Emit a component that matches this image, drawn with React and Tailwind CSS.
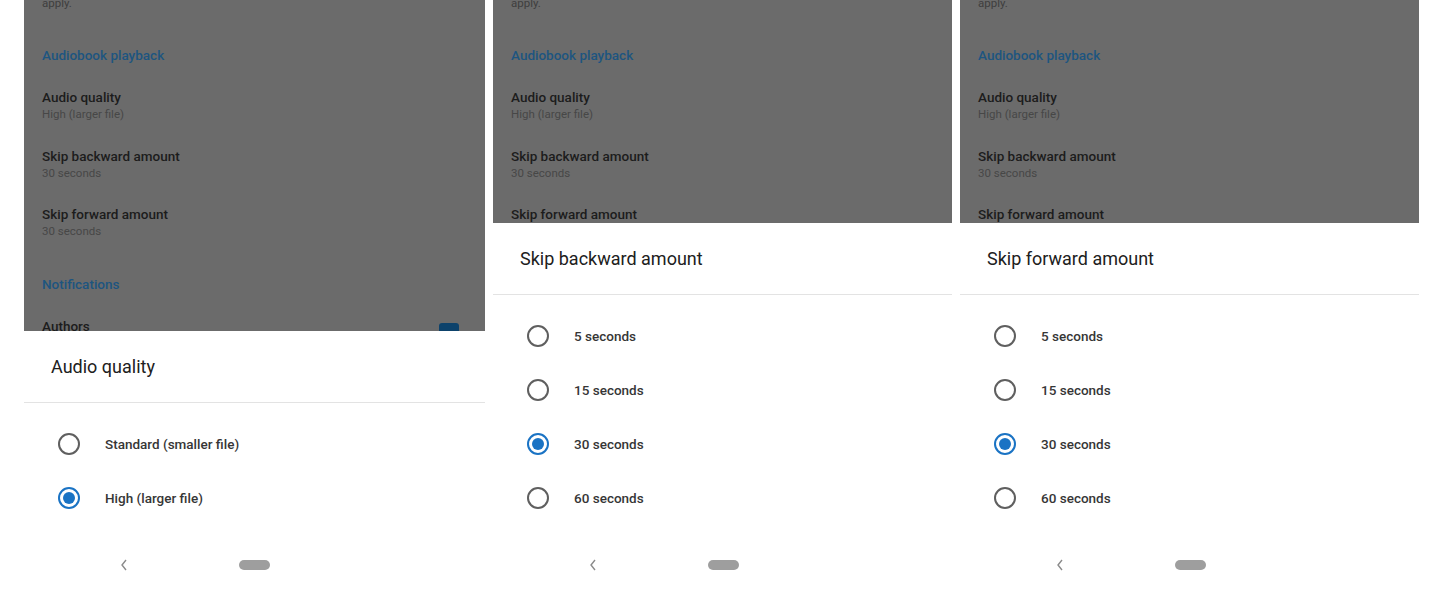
const font = { fontFamily: "Roboto, 'Noto Sans', sans-serif" };

const SettingsBehind = ({ showNotifications }) => (
  <div className="relative flex flex-col px-[18px]">
    <p className="mt-[-4px] text-[11.5px] leading-[14px] text-[#3e3e3e]">apply.</p>
    <p className="mt-[36px] text-[13.5px] font-medium leading-[18px] text-[#1d5580]">Audiobook playback</p>
    <SettingRow title="Audio quality" value="High (larger file)" top="mt-[24px]" />
    <SettingRow title="Skip backward amount" value="30 seconds" top="mt-[26px]" />
    <SettingRow title="Skip forward amount" value="30 seconds" top="mt-[25px]" />
    {showNotifications && (
      <>
        <p className="mt-[37px] text-[13.5px] font-medium leading-[18px] text-[#1d5580]">Notifications</p>
        <div className="mt-[24px] flex items-start justify-between">
          <p className="text-[13.5px] font-medium leading-[18px] text-[#1c1c1c]">Authors</p>
          <div className="mr-[8px] mt-[6px] h-[20px] w-[20px] rounded-[3px] bg-[#0d426b]" />
        </div>
      </>
    )}
  </div>
);

const SettingRow = ({ title, value, top }) => (
  <div className={top}>
    <p className="text-[13.5px] font-medium leading-[18px] text-[#1c1c1c]">{title}</p>
    <p className="mt-[1px] text-[11.5px] leading-[14px] text-[#474747]">{value}</p>
  </div>
);

const Radio = ({ checked }) =>
  checked ? (
    <div className="grid h-[22px] w-[22px] place-items-center rounded-full border-2 border-[#1a73c4]">
      <div className="h-[12px] w-[12px] rounded-full bg-[#1a73c4]" />
    </div>
  ) : (
    <div className="h-[22px] w-[22px] rounded-full border-2 border-[#5f5f5f]" />
  );

const Sheet = ({ title, options, selected }) => (
  <div className="flex flex-1 flex-col bg-white">
    <div className="flex h-[72px] items-center border-b border-[#e3e3e3] pl-[27px]">
      <h2 className="text-[18px] leading-[24px] text-[#202020]">{title}</h2>
    </div>
    <div className="flex flex-col pt-[14px]">
      {options.map((o) => (
        <div key={o} className="flex h-[54px] items-center">
          <div className="ml-[34px] mr-[25px]">
            <Radio checked={o === selected} />
          </div>
          <span className="text-[13.5px] font-medium text-[#363636]">{o}</span>
        </div>
      ))}
    </div>
    <div className="mt-auto flex h-[58px] items-center">
      <svg width="10" height="14" viewBox="0 0 10 14" className="ml-[95px]">
        <path d="M7 2 L3 7 L7 12" fill="none" stroke="#8a8a8a" strokeWidth="1.4" />
      </svg>
      <div className="ml-[110px] h-[10px] w-[31px] rounded-full bg-[#9e9e9e]" />
    </div>
  </div>
);

const Phone = ({ width, dimHeight, showNotifications, title, options, selected }) => (
  <div className={`flex h-full flex-col ${width}`}>
    <div className={`overflow-hidden bg-[#6b6b6b] ${dimHeight}`}>
      <SettingsBehind showNotifications={showNotifications} />
    </div>
    <Sheet title={title} options={options} selected={selected} />
  </div>
);

const seconds = ["5 seconds", "15 seconds", "30 seconds", "60 seconds"];

export default function App() {
  return (
    <div className="flex h-[594px] w-[1434px] gap-[8px] overflow-hidden bg-white pl-[24px]" style={font}>
      <Phone
        width="w-[461px]"
        dimHeight="h-[331px]"
        showNotifications
        title="Audio quality"
        options={["Standard (smaller file)", "High (larger file)"]}
        selected="High (larger file)"
      />
      <Phone
        width="w-[459px]"
        dimHeight="h-[223px]"
        title="Skip backward amount"
        options={seconds}
        selected="30 seconds"
      />
      <Phone
        width="w-[459px]"
        dimHeight="h-[223px]"
        title="Skip forward amount"
        options={seconds}
        selected="30 seconds"
      />
    </div>
  );
}
